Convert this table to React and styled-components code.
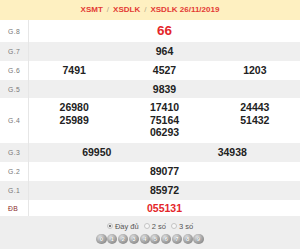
import React from 'react'
import styled, { createGlobalStyle } from 'styled-components'

const GlobalStyle = createGlobalStyle`
  html, body {
    margin: 0;
    padding: 0;
    background: #ffffff;
  }
  body {
    font-family: "Liberation Sans", Arial, sans-serif;
  }
`;

const prizes = [
  { label: 'G.8', h: 22, cols: 1, nums: ['66'], big: true },
  { label: 'G.7', h: 19, cols: 1, nums: ['964'] },
  { label: 'G.6', h: 19, cols: 3, nums: ['7491', '4527', '1203'] },
  { label: 'G.5', h: 18, cols: 1, nums: ['9839'] },
  { label: 'G.4', h: 45, cols: 3, top: true, nums: ['26980\n25989', '17410\n75164\n06293', '24443\n51432'] },
  { label: 'G.3', h: 19, cols: 2, nums: ['69950', '34938'] },
  { label: 'G.2', h: 19, cols: 1, nums: ['89077'] },
  { label: 'G.1', h: 19, cols: 1, nums: ['85972'] },
  { label: 'ĐB', h: 16, cols: 1, nums: ['055131'], red: true },
];

export default function App() {
  return (
    <>
      <GlobalStyle />
      <Board>
        <Header>
          <HeadLink>XSMT</HeadLink>
          <Sep>/</Sep>
          <HeadLink>XSDLK</HeadLink>
          <Sep>/</Sep>
          <HeadLink>XSDLK 26/11/2019</HeadLink>
        </Header>
        {prizes.map((p, i) => (
          <Row key={p.label} $h={p.h} $shade={i % 2 === 1}>
            <Label $red={p.red}>{p.label}</Label>
            <Numbers $cols={p.cols} $top={p.top}>
              {p.nums.map((n, j) => (
                <Num key={j} $big={p.big} $red={p.big || p.red}>{n}</Num>
              ))}
            </Numbers>
          </Row>
        ))}
        <Footer>
          <Options>
            <Option><Radio $on />Đầy đủ</Option>
            <Option><Radio />2 số</Option>
            <Option><Radio />3 số</Option>
          </Options>
          <Balls>
            {[0, 1, 2, 3, 4, 5, 6, 7, 8, 9].map((d) => (
              <Ball key={d}>{d}</Ball>
            ))}
          </Balls>
        </Footer>
      </Board>
    </>
  )
}

const Board = styled.div`
  width: 300px;
  height: 249px;
  display: flex;
  flex-direction: column;
  overflow: hidden;
`;

const Header = styled.div`
  height: 20px;
  background: #fef0c1;
  display: flex;
  align-items: center;
  justify-content: center;
  gap: 4px;
  font-size: 8px;
  font-weight: bold;
  padding-bottom: 1px;
  box-sizing: border-box;
`;

const HeadLink = styled.span`
  color: #e33a34;
`;

const Sep = styled.span`
  color: #b5a98a;
  font-weight: normal;
`;

const Row = styled.div`
  height: ${(p) => p.$h}px;
  display: grid;
  grid-template-columns: 29px 1fr;
  background: ${(p) => (p.$shade ? '#efefef' : '#ffffff')};
`;

const Label = styled.div`
  display: flex;
  align-items: center;
  padding-left: 8px;
  font-size: 6.8px;
  letter-spacing: 0.4px;
  color: ${(p) => (p.$red ? '#8a2a2a' : '#777777')};
  border-right: 1px solid #e6e6e6;
`;

const Numbers = styled.div`
  display: grid;
  grid-template-columns: repeat(${(p) => p.$cols}, 1fr);
  align-items: ${(p) => (p.$top ? 'start' : 'center')};
  padding-top: ${(p) => (p.$top ? '3px' : '0')};
`;

const Num = styled.div`
  text-align: center;
  white-space: pre-line;
  font-weight: bold;
  font-size: ${(p) => (p.$big ? '13.5px' : '10.5px')};
  line-height: 12.5px;
  color: ${(p) => (p.$red ? '#e4262a' : '#222222')};
`;

const Footer = styled.div`
  flex: 1;
  background: #eeeeee;
  display: flex;
  flex-direction: column;
  align-items: center;
  padding-top: 6px;
  gap: 4px;
`;

const Options = styled.div`
  display: flex;
  align-items: center;
  gap: 5px;
  height: 8px;
`;

const Option = styled.span`
  display: flex;
  align-items: center;
  gap: 2px;
  font-size: 7.5px;
  color: #555555;
`;

const Radio = styled.span`
  width: 6px;
  height: 6px;
  border-radius: 50%;
  box-sizing: border-box;
  border: 1px solid #c4c4c4;
  background: ${(p) =>
    p.$on ? 'radial-gradient(circle, #777 0 1.3px, #f4f4f4 1.6px)' : '#f7f7f7'};
`;

const Balls = styled.div`
  display: flex;
  gap: 0.6px;
`;

const Ball = styled.span`
  width: 10.2px;
  height: 10.2px;
  border-radius: 50%;
  background: radial-gradient(circle at 40% 35%, #ececec 0, #acacac 45%, #6f6f6f 100%);
  color: #ffffff;
  font-size: 6px;
  font-weight: bold;
  display: flex;
  align-items: center;
  justify-content: center;
  text-shadow: 0 0 1px #444;
`;
